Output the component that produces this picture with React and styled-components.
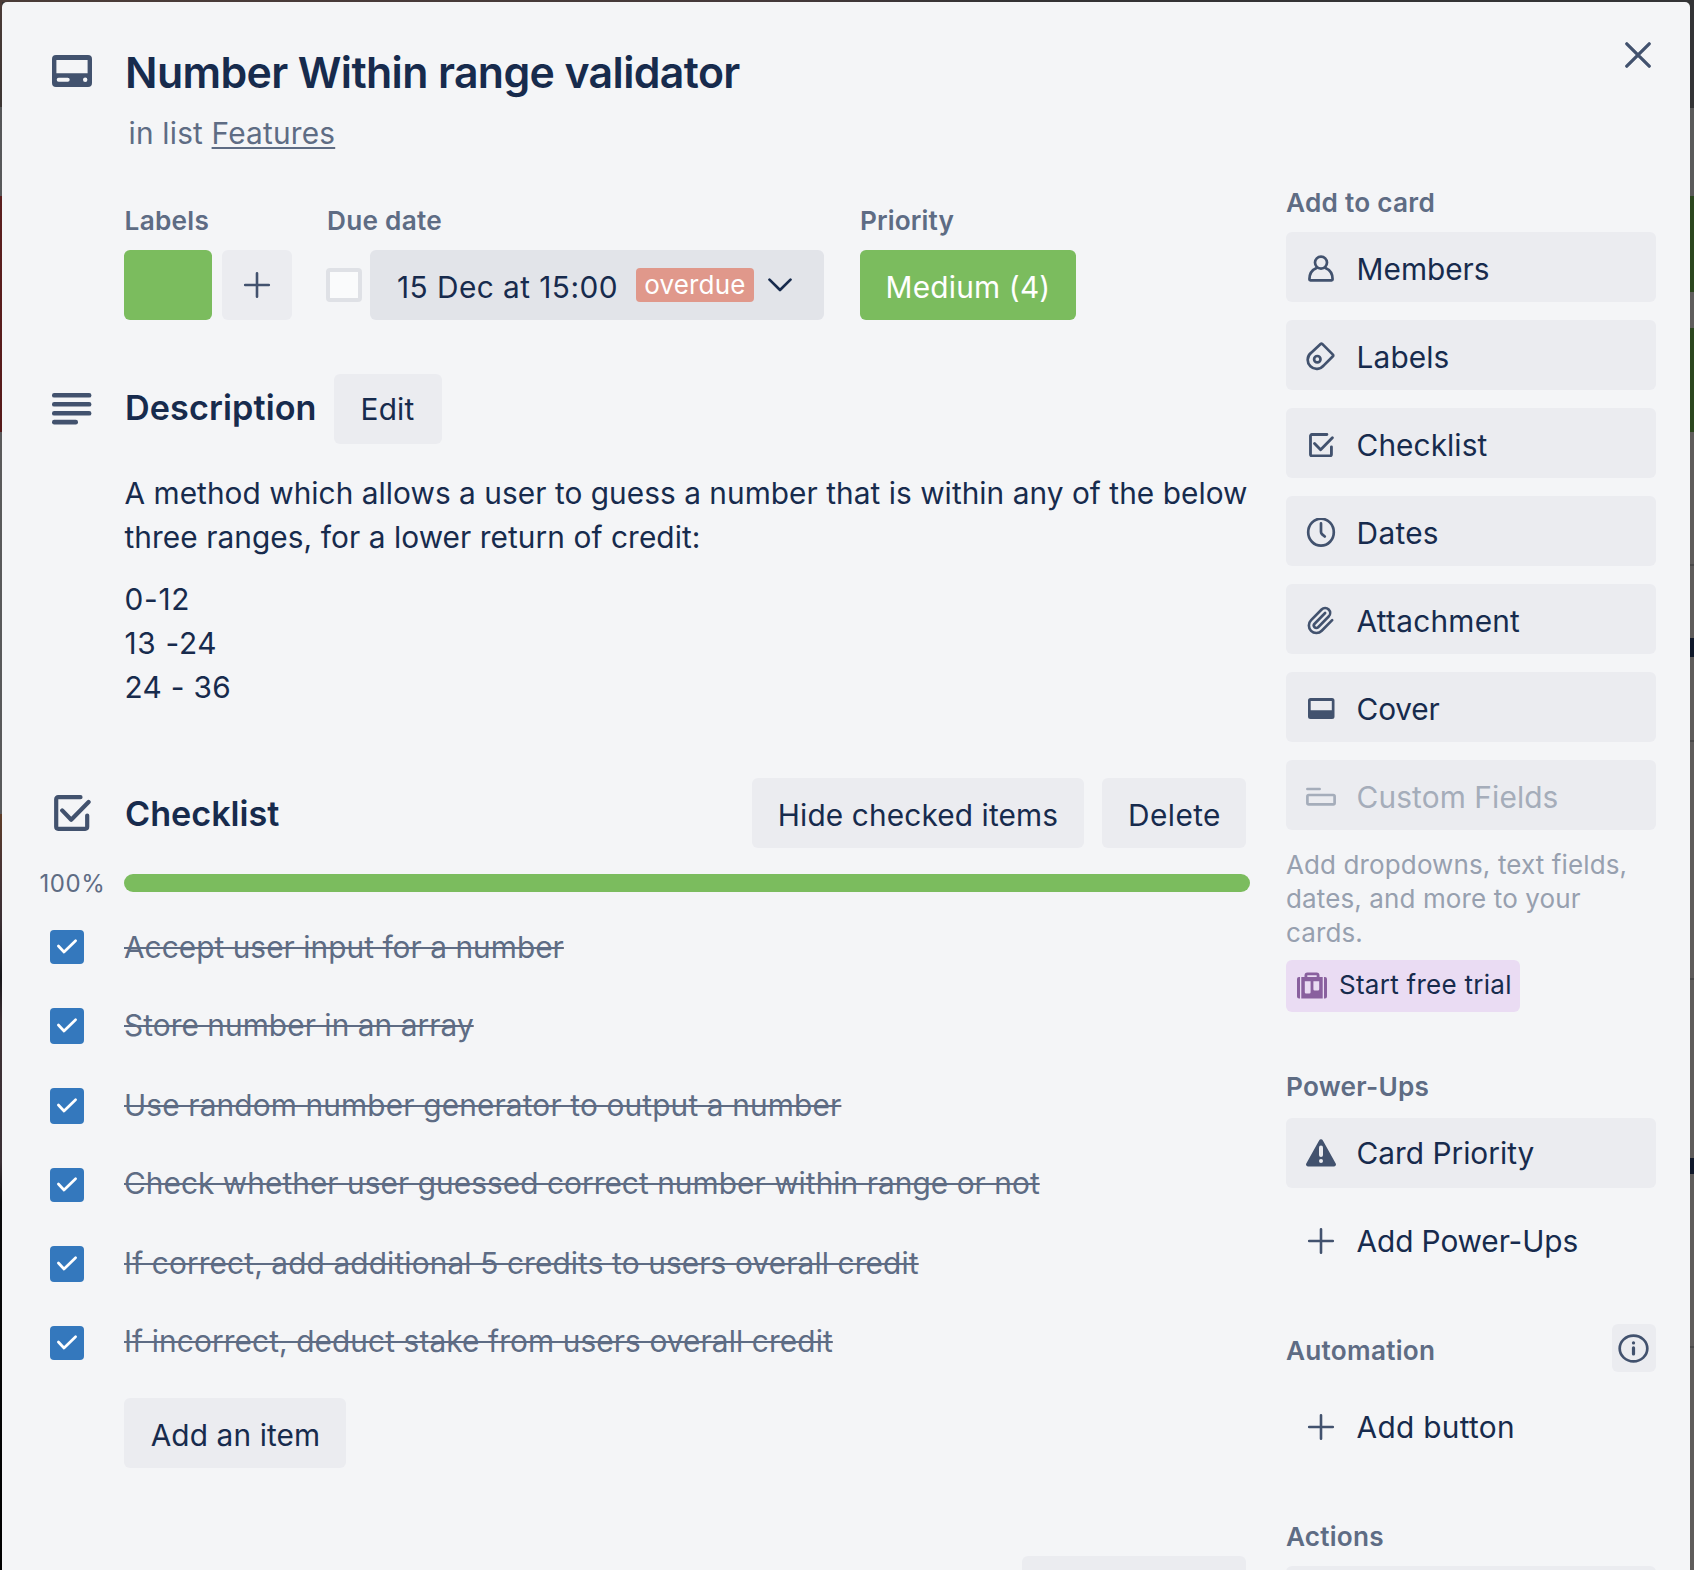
import React from "react";
import styled, { createGlobalStyle } from "styled-components";

const color = {
  surface: "#f4f5f7",
  button: "#ebecf0",
  buttonDark: "#e2e4e9",
  text: "#172b4d",
  muted: "#5e6c84",
  icon: "#42526e",
  disabled: "#a5adba",
  hint: "#97a0af",
  green: "#7bbc5e",
  blue: "#3478bd",
  overdue: "#e0988b",
  trial: "#eadcf3",
  trialIcon: "#89609e",
};

const GlobalStyle = createGlobalStyle`
  *, *::before, *::after { box-sizing: border-box; }
  body {
    margin: 0;
    font-family: Inter, "Liberation Sans", sans-serif;
    font-size: 29.8px;
    color: ${color.text};
    background: #333;
  }
  h2, h3, h4, p, ul { margin: 0; padding: 0; font-weight: 400; }
  button { font: inherit; color: inherit; border: 0; }
  svg { display: block; flex: none; }
`;

const Board = styled.div`
  display: grid;
  grid-template-columns: 2px 1688px 4px;
  grid-template-rows: 2px 1568px;
  width: 1694px;
  height: 1570px;
  overflow: hidden;
`;

const TopEdge = styled.div`
  grid-column: 1 / -1;
  background: linear-gradient(90deg, #4a3c38 0, #45393a 45%, #333234 60%, #333436 100%);
`;

const LeftEdge = styled.div`
  background: linear-gradient(
    180deg,
    #4a3a36 0, #3c3634 105px, #555658 105px, #58595b 194px,
    #5b1f1f 194px, #561a1a 430px, #5a5a5b 430px, #58595b 812px,
    #5e3d28 812px, #4a3433 860px, #3a2e33 920px, #17161a 975px,
    #3d2f34 1020px, #3a3035 1160px, #0a0a0c 1200px, #000 1568px
  );
`;

const RightEdge = styled.div`
  background: linear-gradient(
    180deg,
    #333436 0, #333436 106px, #5b5a5a 106px, #5b5a5a 194px,
    #2c471e 194px, #2c471e 290px, #5f5d5c 290px, #5f5d5c 326px,
    #2c471e 326px, #2c471e 430px, #5f5c5b 430px, #5f5c5b 562px,
    #4a4949 562px, #4a4949 564px, #5f5c5b 564px, #5f5c5b 636px,
    #10182a 636px, #10182a 655px, #5f5c5b 655px, #5f5c5b 738px,
    #4a4949 738px, #4a4949 740px, #5f5c5b 740px, #5f5c5b 976px,
    #4a4949 976px, #4a4949 978px, #5f5c5b 978px, #5f5c5b 1156px,
    #10182a 1156px, #10182a 1172px, #5f5c5b 1172px, #5f5c5b 1344px,
    #4a4949 1344px, #4a4949 1346px, #5f5c5b 1346px, #5f5c5b 1568px
  );
`;

const Dialog = styled.section`
  background: ${color.surface};
  border-radius: 5px 5px 0 0;
  overflow: hidden;
`;

const Txt = styled.span`
  letter-spacing: ${(p) => p.$ls || 0}px;
  white-space: nowrap;
`;

/* Header */
const Header = styled.header`
  display: flex;
  align-items: flex-start;
  padding: 44px 39px 0 0;
`;

const Gutter = styled.div`
  flex: none;
  width: 123px;
  padding-left: ${(p) => p.$inset || 50}px;
  padding-top: ${(p) => p.$top || 0}px;
`;

const HeaderText = styled.div`flex: 1;`;

const Title = styled.h2`
  padding-top: 1px;
  font-size: 42.8px;
  font-weight: 600;
  line-height: 52px;
  letter-spacing: -0.61px;
`;

const Subtitle = styled.p`
  margin-top: 14px;
  padding-left: 3.5px;
  line-height: 40px;
  color: ${color.muted};
  letter-spacing: 0.2px;
`;

const ListLink = styled.a`
  text-decoration: underline;
  text-decoration-thickness: 2px;
  text-underline-offset: 3px;
  text-decoration-skip-ink: none;
`;

const CloseButton = styled.button`
  background: none;
  padding: 0;
  margin-top: -4px;
`;

const Body = styled.div`
  display: flex;
  align-items: flex-start;
`;

const Main = styled.main`
  width: 1248px;
  padding-top: 52px;
`;

/* Shared pieces */
const SmallHeading = styled.h4`
  font-size: 26.2px;
  font-weight: 600;
  line-height: 32px;
  color: ${color.muted};
  letter-spacing: ${(p) => p.$ls ?? 0.26}px;
  padding-left: ${(p) => p.$inset || 0}px;
  margin-bottom: ${(p) => p.$gap ?? 13}px;
`;

const Button = styled.button`
  display: flex;
  align-items: center;
  justify-content: center;
  height: 70px;
  width: ${(p) => p.$w}px;
  padding: ${(p) => (p.$low ? 4 : 0)}px 0 0 ${(p) => p.$shift || 0}px;
  border-radius: 6px;
  background: ${(p) => p.$bg || color.button};
  color: ${(p) => p.$fg || color.text};
`;

/* Card details */
const Details = styled.div`
  display: flex;
  padding-left: 122px;
`;

const Detail = styled.div`
  margin-right: ${(p) => p.$after || 0}px;
`;

const DetailRow = styled.div`
  display: flex;
  align-items: center;
  gap: ${(p) => p.$gap || 0}px;
`;

const LabelSwatch = styled.div`
  width: 88px;
  height: 70px;
  border-radius: 6px;
  background: ${color.green};
`;

const PlusButton = styled(Button)`
  width: 70px;
  padding: 0 1px 0 0;
`;

const EmptyCheckbox = styled.div`
  width: 36px;
  height: 34px;
  border: 4px solid #dfe1e6;
  border-radius: 4px;
  background: #fafbfc;
`;

const DateButton = styled(Button)`
  justify-content: flex-start;
  width: 454px;
  padding: 0 0 0 27px;
  background: ${color.buttonDark};
`;

const DateText = styled(Txt)`padding-top: 4px;`;

const Badge = styled.span`
  display: flex;
  align-items: center;
  justify-content: center;
  width: 118px;
  height: 34px;
  padding-bottom: 2px;
  margin: 0 14px 0 18px;
  border-radius: 4px;
  background: ${color.overdue};
  color: #fff;
  font-size: 26px;
  letter-spacing: 0.15px;
`;

/* Sections */
const SectionHead = styled.div`
  display: flex;
  align-items: center;
  height: 70px;
  margin-top: ${(p) => p.$mt}px;
  padding-right: 4px;
`;

const SectionTitle = styled.h3`
  font-size: 34.2px;
  font-weight: 600;
  line-height: 44px;
  letter-spacing: ${(p) => p.$ls}px;
  padding-top: ${(p) => p.$drop || 0}px;
  padding-bottom: ${(p) => p.$lift || 0}px;
`;

const EditButton = styled(Button)`
  width: 108px;
  margin-left: auto;
  margin-right: 804px;
  padding-right: 1px;
`;

const Actions = styled.div`
  display: flex;
  gap: 18px;
  margin-left: auto;
`;

const Description = styled.div`
  display: grid;
  gap: 18px;
  margin-top: 27px;
  padding-left: 122.5px;
  line-height: 44px;
`;

const Progress = styled.div`
  display: flex;
  align-items: center;
  height: 18px;
  margin-top: 26px;
`;

const Percent = styled.span`
  width: 122px;
  padding: 1px 0 0 37.5px;
  font-size: 24px;
  line-height: 18px;
  letter-spacing: 0.55px;
  color: ${color.muted};
`;

const Track = styled.div`
  flex: 1;
  height: 18px;
  border-radius: 9px;
  background: ${color.green};
`;

const Items = styled.ul`
  list-style: none;
  margin-top: 35px;
`;

const Item = styled.li`
  display: flex;
  align-items: flex-start;
  height: 78px;
  &:nth-child(even) { height: 80px; }
  &:last-child { height: 77px; }
`;

const Tick = styled.span`
  display: flex;
  align-items: center;
  flex: none;
  width: 34px;
  height: ${(p) => p.$h}px;
  margin: ${(p) => p.$top}px 40px 0 48px;
  border-radius: 4px;
  background: ${color.blue};
`;

const ItemText = styled.span`
  line-height: 40px;
  white-space: nowrap;
  color: ${color.muted};
  letter-spacing: ${(p) => p.$ls}px;
  text-decoration: line-through;
  text-decoration-thickness: 2px;
`;

const Indent = styled.div`padding-left: 122px;`;

const ActivityHead = styled.div`
  display: flex;
  justify-content: flex-end;
  margin-top: 88px;
  padding-right: 4px;
`;

/* Sidebar */
const Sidebar = styled.aside`
  width: 370px;
  margin-left: 36px;
  padding-top: 34px;
`;

const Stack = styled.div`
  display: grid;
  gap: 18px;
  margin-bottom: ${(p) => p.$after || 0}px;
`;

const SideButton = styled(Button)`
  justify-content: flex-start;
  gap: 20.6px;
  width: 370px;
  padding-left: 20px;
`;

const Hint = styled.p`
  font-size: 26px;
  line-height: 34px;
  letter-spacing: 0.12px;
  color: ${color.hint};
  white-space: nowrap;
`;

const TrialButton = styled.button`
  display: flex;
  align-items: center;
  gap: 12px;
  width: 234px;
  height: 52px;
  margin: 10px 0 59px;
  padding: 0 0 2px 11px;
  border-radius: 6px;
  background: ${color.trial};
  font-size: 26px;
`;

const TrialText = styled(Txt)`padding-bottom: 2px;`;

const AutomationHead = styled.div`
  display: flex;
  align-items: center;
  justify-content: space-between;
  height: 48px;
  margin-bottom: 20px;
`;

const AutomationTitle = styled(SmallHeading)`padding-top: 6px;`;

const InfoButton = styled.button`
  display: grid;
  place-items: center;
  width: 44px;
  height: 48px;
  padding: 1px 1px 0 0;
  border-radius: 6px;
  background: ${color.button};
`;

/* Icons */
const line = (width, stroke = color.icon) => ({
  fill: "none", stroke, strokeWidth: width, strokeLinecap: "round", strokeLinejoin: "round",
});

const CardIcon = () => (
  <svg width="40" height="32" viewBox="0 0 40 32">
    <path fill={color.icon} fillRule="evenodd" d="M4 0h32a4 4 0 0 1 4 4v24a4 4 0 0 1-4 4H4a4 4 0 0 1-4-4V4a4 4 0 0 1 4-4ZM4.4 5v13.2h31.2V5ZM6.7 22.8a2 2 0 0 0 0 4h9a2 2 0 0 0 0-4ZM33.2 22.6a2.2 2.2 0 1 0 0 4.4 2.2 2.2 0 0 0 0-4.4Z" />
  </svg>
);
const LinesIcon = () => (
  <svg width="40" height="32" viewBox="0 0 40 32" fill={color.icon}>
    <rect width="39.4" height="4.6" rx="2.2" />
    <rect y="9" width="39.4" height="4.6" rx="2.2" />
    <rect y="18" width="39.4" height="4.6" rx="2.2" />
    <rect y="26.8" width="26" height="4.6" rx="2.2" />
  </svg>
);
const ChecklistIcon = ({ size = 37 }) => (
  <svg width={size} height={(size * 36) / 37} viewBox="0 0 37 36" {...line(4.2)}>
    <path d="M26.5 2.2H4.2a2 2 0 0 0-2 2V31.8a2 2 0 0 0 2 2H31.2a2 2 0 0 0 2-2V20.5" />
    <path d="M8.2 15.4 17.2 24.8 34.6 7" />
  </svg>
);
const CloseIcon = () => (
  <svg width="26" height="26" viewBox="0 0 26 26" {...line(3.3)}>
    <path d="M1.8 1.8 24.2 24.2M24.2 1.8 1.8 24.2" />
  </svg>
);
const PlusIcon = () => (
  <svg width="30" height="30" viewBox="0 0 30 30" {...line(2.6)}>
    <path d="M15 3.2V26.8M3.2 15H26.8" />
  </svg>
);
const ChevronIcon = () => (
  <svg width="24" height="14" viewBox="0 0 24 14" {...line(2.7, color.text)}>
    <path d="M1.5 1.6 12 12 22.5 1.6" />
  </svg>
);
const CheckIcon = () => (
  <svg width="34" height="34" viewBox="0 0 34 34" {...line(2.7, "#fff")}>
    <path d="M8.4 16 14 22 25.6 10.8" />
  </svg>
);
const MemberIcon = () => (
  <svg width="30" height="30" viewBox="0 0 30 30" {...line(2.7)}>
    <circle cx="15" cy="8.6" r="6" />
    <path d="M10.6 13.9C6.4 15.6 3.4 19.8 3.4 25.2c0 .7.4 1.1 1 1.1h21.2c.6 0 1-.4 1-1.1 0-5.4-3-9.600-7.200-11.300" />
  </svg>
);
const TagIcon = () => (
  <svg width="30" height="30" viewBox="-0.6 0 30 30" {...line(2.7)}>
    <path d="M4.4 10.9 14 1.9a1.2 1.2 0 0 1 1.6 0L26.3 12.6a1.2 1.2 0 0 1 0 1.7L17.2 23.4A9 9 0 1 1 4.4 10.9Z" />
    <circle cx="10.7" cy="17.2" r="3.2" />
  </svg>
);
const ClockIcon = () => (
  <svg width="30" height="30" viewBox="0 0.8 30 30" {...line(2.7)}>
    <ellipse cx="15" cy="15" rx="12.8" ry="13.5" />
    <path d="M15 6.2V14.6q0 1.3.9 2.3L18.8 19.3" />
  </svg>
);
const ClipIcon = () => (
  <svg width="30" height="30" viewBox="0.7 0.4 24 24" {...line(2.1)}>
    <path d="m16 6-8.414 8.586a2 2 0 0 0 2.829 2.829l8.414-8.586a4 4 0 1 0-5.657-5.657l-8.379 8.551a6 6 0 1 0 8.485 8.485l8.379-8.551" />
  </svg>
);
const CoverIcon = () => (
  <svg width="30" height="30" viewBox="0 0 30 30">
    <path fill={color.icon} fillRule="evenodd" d="M4.5 4h21.500a2.500 2.500 0 0 1 2.500 2.500v16a2.500 2.500 0 0 1-2.500 2.500H4.500A2.500 2.500 0 0 1 2 22.500v-16A2.500 2.500 0 0 1 4.500 4ZM4.700 7v9.200h21.100V7Z" />
  </svg>
);
const FieldsIcon = () => (
  <svg width="30" height="30" viewBox="0 0 30 30" {...line(2.7, color.disabled)}>
    <path d="M1.4 7H13.6" />
    <rect x="1.4" y="13" width="27.2" height="9.4" rx="1.4" />
  </svg>
);
const SuitcaseIcon = () => (
  <svg width="30" height="27" viewBox="0 0 30 27">
    <path fill="none" stroke={color.trialIcon} strokeWidth="2.8" d="M8.9 6V3.400a1.500 1.500 0 0 1 1.500-1.500h9.200a1.500 1.500 0 0 1 1.500 1.500V6" />
    <path fill={color.trialIcon} fillRule="evenodd" d="M2 5h1v21.500H2a2 2 0 0 1-2-2V7a2 2 0 0 1 2-2ZM27 5h1a2 2 0 0 1 2 2v17.500a2 2 0 0 1-2 2h-1ZM4.300 5h21.400v21.500H4.300ZM7.800 9.200v11.100a1.200 1.200 0 0 0 1.200 1.200h3.400a1.200 1.200 0 0 0 1.200-1.200V9.200ZM16.400 9.200v8a1.200 1.200 0 0 0 1.200 1.200H21a1.200 1.200 0 0 0 1.200-1.200v-8Z" />
  </svg>
);
const WarningIcon = () => (
  <svg width="30" height="30" viewBox="0 0 30 30">
    <path fill={color.icon} d="M13.1 2.400a2.200 2.200 0 0 1 3.800 0L29.700 25.500a2.100 2.100 0 0 1-1.900 3.100H2.200a2.100 2.100 0 0 1-1.900-3.100Z" />
    <rect x="13" y="7.5" width="4" height="11.5" rx="2" fill={color.button} />
    <circle cx="15" cy="23" r="2" fill={color.button} />
  </svg>
);
const InfoIcon = () => (
  <svg width="31" height="29" viewBox="0 0 31 29" {...line(2.7)}>
    <ellipse cx="15.5" cy="14.5" rx="13.8" ry="12.9" />
    <path strokeWidth="3.2" d="M15.5 13.8V20M15.5 8.8V8.900" />
  </svg>
);

const IconSlot = styled.span`
  display: flex;
  justify-content: center;
  width: 30px;
`;

const SmallChecklistIcon = () => (
  <IconSlot><ChecklistIcon size={25} /></IconSlot>
);

const checklist = [
  { text: "Accept user input for a number", ls: 0.05, top: 3, h: 34 },
  { text: "Store number in an array", ls: 0.07, top: 3, h: 36 },
  { text: "Use random number generator to output a number", ls: 0.16, top: 3, h: 36 },
  { text: "Check whether user guessed correct number within range or not", ls: 0.06, top: 5, h: 34 },
  { text: "If correct, add additional 5 credits to users overall credit", ls: 0.13, top: 3, h: 36 },
  { text: "If incorrect, deduct stake from users overall credit", ls: 0.11, top: 5, h: 34 },
];

const addToCard = [
  { label: "Members", Icon: MemberIcon, ls: 0 },
  { label: "Labels", Icon: TagIcon, ls: 0.12 },
  { label: "Checklist", Icon: SmallChecklistIcon, ls: 0.07 },
  { label: "Dates", Icon: ClockIcon, ls: 0.3 },
  { label: "Attachment", Icon: ClipIcon, ls: 0.24 },
  { label: "Cover", Icon: CoverIcon, ls: -0.15 },
  { label: "Custom Fields", Icon: FieldsIcon, ls: 0.12, disabled: true },
];

export default function App() {
  return (
    <Board>
      <GlobalStyle />
      <TopEdge />
      <LeftEdge />
      <Dialog>
        <Header>
          <Gutter $top={9}><CardIcon /></Gutter>
          <HeaderText>
            <Title>Number Within range validator</Title>
            <Subtitle>in list <ListLink>Features</ListLink></Subtitle>
          </HeaderText>
          <CloseButton aria-label="Close"><CloseIcon /></CloseButton>
        </Header>

        <Body>
          <Main>
            <Details>
              <Detail $after={34}>
                <SmallHeading $gap={13} $inset={0.6}>Labels</SmallHeading>
                <DetailRow $gap={10}>
                  <LabelSwatch />
                  <PlusButton aria-label="Add label"><PlusIcon /></PlusButton>
                </DetailRow>
              </Detail>
              <Detail $after={36}>
                <SmallHeading $gap={13} $inset={1}>Due date</SmallHeading>
                <DetailRow $gap={8}>
                  <EmptyCheckbox />
                  <DateButton>
                    <DateText $ls={0.45}>15 Dec at 15:00</DateText>
                    <Badge>overdue</Badge>
                    <ChevronIcon />
                  </DateButton>
                </DetailRow>
              </Detail>
              <Detail>
                <SmallHeading $gap={13} $ls={0.12}>Priority</SmallHeading>
                <Button $w={216} $low $bg={color.green} $fg="#fff">
                  <Txt $ls={0.2}>Medium (4)</Txt>
                </Button>
              </Detail>
            </Details>

            <SectionHead $mt={54}>
              <Gutter><LinesIcon /></Gutter>
              <SectionTitle $ls={0.1} $lift={2}>Description</SectionTitle>
              <EditButton><Txt $ls={0.21}>Edit</Txt></EditButton>
            </SectionHead>
            <Description>
              <p>
                <Txt $ls={0.05}>A method which allows a user to guess a number that is within any of the below</Txt>
                <br />
                <Txt $ls={0.08}>three ranges, for a lower return of credit:</Txt>
              </p>
              <p>
                <Txt $ls={0.7}>0-12</Txt>
                <br />
                <Txt $ls={0.7}>13 -24</Txt>
                <br />
                <Txt $ls={0.3}>24 - 36</Txt>
              </p>
            </Description>

            <SectionHead $mt={69}>
              <Gutter $inset={52}><ChecklistIcon /></Gutter>
              <SectionTitle $ls={-0.02} $drop={2}>Checklist</SectionTitle>
              <Actions>
                <Button $w={332} $low><Txt $ls={0.13}>Hide checked items</Txt></Button>
                <Button $w={144} $low $shift={1}><Txt $ls={0.42}>Delete</Txt></Button>
              </Actions>
            </SectionHead>
            <Progress>
              <Percent>100%</Percent>
              <Track />
            </Progress>
            <Items>
              {checklist.map((item) => (
                <Item key={item.text}>
                  <Tick $top={item.top} $h={item.h}><CheckIcon /></Tick>
                  <ItemText $ls={item.ls}>{item.text}</ItemText>
                </Item>
              ))}
            </Items>
            <Indent>
              <Button $w={222} $low $shift={1}><Txt $ls={0.13}>Add an item</Txt></Button>
            </Indent>
            <ActivityHead>
              <Button $w={224} />
            </ActivityHead>
          </Main>

          <Sidebar>
            <SmallHeading>Add to card</SmallHeading>
            <Stack $after={18}>
              {addToCard.map(({ label, Icon, ls, disabled }) => (
                <SideButton key={label} $low $shift={20} $fg={disabled && color.disabled}>
                  <Icon />
                  <Txt $ls={ls}>{label}</Txt>
                </SideButton>
              ))}
            </Stack>
            <Hint>
              Add dropdowns, text fields,<br />dates, and more to your<br />cards.
            </Hint>
            <TrialButton>
              <SuitcaseIcon />
              <TrialText $ls={0.27}>Start free trial</TrialText>
            </TrialButton>

            <SmallHeading $gap={15}>Power-Ups</SmallHeading>
            <Stack $after={48}>
              <SideButton $shift={20}><WarningIcon /><Txt>Card Priority</Txt></SideButton>
              <SideButton $shift={20} $bg="transparent"><PlusIcon /><Txt $ls={-0.1}>Add Power-Ups</Txt></SideButton>
            </Stack>

            <AutomationHead>
              <AutomationTitle $gap={0}>Automation</AutomationTitle>
              <InfoButton aria-label="About automation"><InfoIcon /></InfoButton>
            </AutomationHead>
            <Stack $after={59}>
              <SideButton $shift={20} $bg="transparent"><PlusIcon /><Txt $ls={0.3}>Add button</Txt></SideButton>
            </Stack>

            <SmallHeading $ls={0.2}>Actions</SmallHeading>
            <SideButton />
          </Sidebar>
        </Body>
      </Dialog>
      <RightEdge />
    </Board>
  );
}
